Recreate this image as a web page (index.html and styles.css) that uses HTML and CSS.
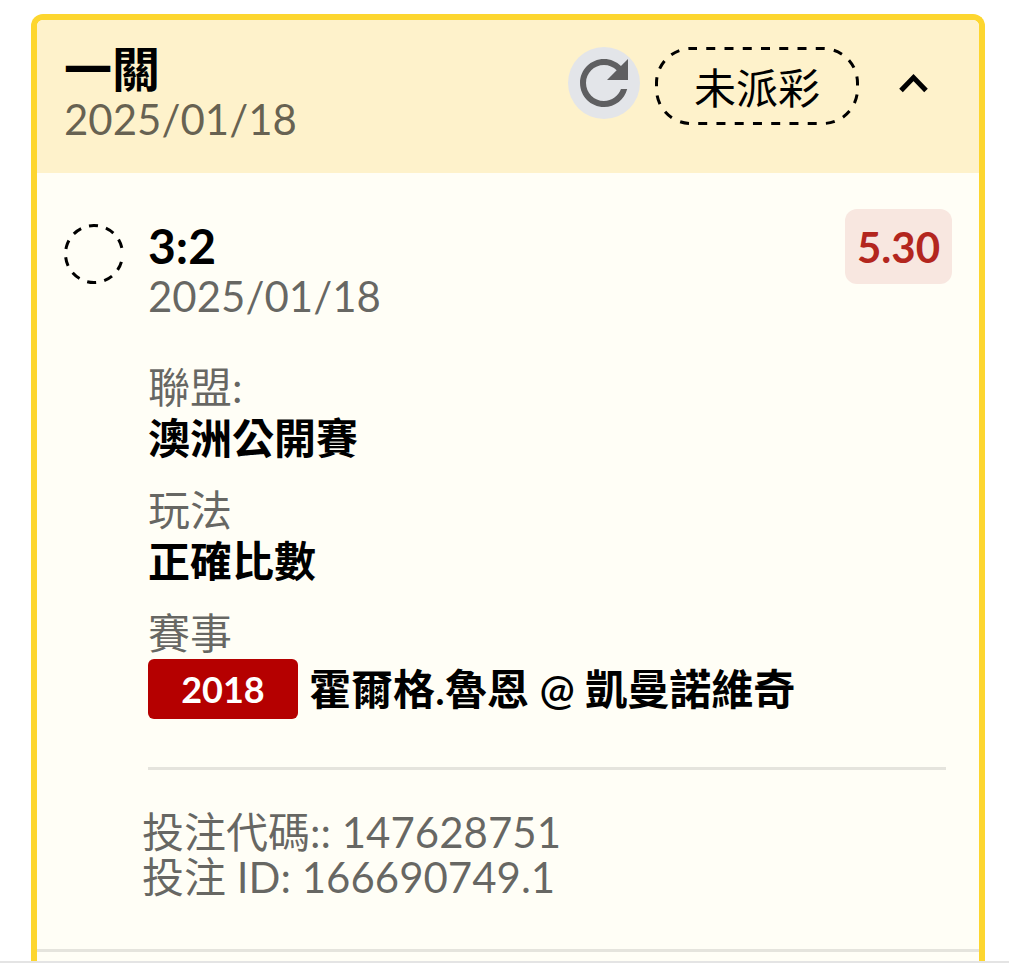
FILE: index.html
```html
<!DOCTYPE html>
<html lang="zh-Hant">
<head>
    <meta charset="UTF-8">
    <meta name="viewport" content="width=device-width, initial-scale=1.0">
    <title>一關</title>
    <link rel="stylesheet" href="styles.css">
</head>
<body>
    <main class="bet-card">
        <header class="bet-header">
            <div class="bet-heading">
                <h1 class="title">一關</h1>
                <p class="date">2025/01/18</p>
            </div>
            <div class="actions">
                <button class="refresh" type="button" aria-label="重新整理">
                    <svg viewBox="0 0 24 24">
                        <path fill="#5f5f61" d="M17.65 6.35C16.2 4.9 14.21 4 12 4c-4.42 0-7.99 3.58-7.99 8s3.57 8 7.99 8c3.73 0 6.84-2.55 7.73-6h-2.08c-.82 2.33-3.04 4-5.65 4-3.31 0-6-2.69-6-6s2.69-6 6-6c1.66 0 3.14.69 4.22 1.78L13 11h7V4l-2.35 2.35z"/>
                    </svg>
                </button>
                <div class="status">
                    <svg class="status-outline" viewBox="0 0 204 78" fill="none">
                        <rect x="1.5" y="1.5" width="201" height="75" rx="34.5" stroke="#000" stroke-width="3" stroke-dasharray="9 9.25" stroke-dashoffset="3"/>
                    </svg>
                    <span>未派彩</span>
                </div>
                <button class="toggle" type="button" aria-label="收合" aria-expanded="true">
                    <svg viewBox="0 0 30 20" fill="none">
                        <path d="M2 17.5L14.5 4.5L27 17.5" stroke="#000" stroke-width="5"/>
                    </svg>
                </button>
            </div>
        </header>

        <section class="bet-body">
            <svg class="pending" viewBox="0 0 60 60" fill="none">
                <circle cx="30" cy="30" r="28.5" stroke="#000" stroke-width="3" transform="rotate(16 30 30)" stroke-dasharray="9 8.3 9 8.3 9 8.3 9 8.3 9 8.3 9 8.3 9 8.3 9 8.3 9 8.3 9 15"/>
            </svg>
            <div class="selection">
                <h2 class="title">3:2</h2>
                <p class="date">2025/01/18</p>
            </div>
            <span class="odds">5.30</span>

            <dl class="details">
                <div class="detail">
                    <dt>聯盟:</dt>
                    <dd>澳洲公開賽</dd>
                </div>
                <div class="detail">
                    <dt>玩法</dt>
                    <dd>正確比數</dd>
                </div>
                <div class="detail">
                    <dt>賽事</dt>
                    <dd class="match"><span class="tag">2018</span>霍爾格.魯恩 @ 凱曼諾維奇</dd>
                </div>
            </dl>

            <div class="codes">
                <p>投注代碼:: 147628751</p>
                <p>投注 ID: 166690749.1</p>
            </div>
        </section>
    </main>
</body>
</html>
```

FILE: styles.css
```css
* {
    box-sizing: border-box;
}

body {
    display: flex;
    flex-direction: column;
    min-height: 100vh;
    margin: 0;
    padding: 14px 24px 0 31px;
    border-bottom: 2px solid #e4e4e4;
    background-color: #fff;
    color: #000;
    font-family: Lato, "Noto Sans CJK TC", sans-serif;
    font-size: 42px;
    line-height: 51px;
}

h1, h2, p, dl, dd {
    margin: 0;
}

button {
    padding: 0;
    border: 0;
    background: none;
    cursor: pointer;
}

svg {
    display: block;
}

.bet-card {
    flex: 1;
    border: 6px solid #fdd62f;
    border-bottom: 0;
    border-radius: 12px 12px 0 0;
    background-color: #fffef6;
}

.bet-header {
    display: flex;
    justify-content: space-between;
    padding: 24px 50px 29px 27px;
    border-radius: 6px 6px 0 0;
    background-color: #fef2cb;
}

.title {
    font-size: 48px;
    font-weight: 700;
    line-height: 50px;
}

.date {
    line-height: 50px;
    color: rgba(0, 0, 0, 0.6);
}

.actions {
    display: flex;
    align-items: flex-start;
    gap: 15px;
    padding-top: 3px;
}

.refresh {
    width: 72px;
    height: 72px;
    border-radius: 50%;
    background-color: #e3e5e9;
}

.status {
    position: relative;
    display: flex;
    align-items: center;
    justify-content: center;
    width: 204px;
    height: 78px;
    padding-top: 4px;
}

.status-outline {
    position: absolute;
    inset: 0;
}

.toggle {
    display: flex;
    align-items: center;
    justify-content: flex-end;
    width: 55px;
    height: 72px;
}

.toggle svg {
    width: 30px;
}

.bet-body {
    display: grid;
    grid-template-columns: 60px 1fr auto;
    column-gap: 24px;
    align-items: start;
    padding: 36px 27px 49px;
    border-bottom: 3px solid #e5e4dd;
}

.pending {
    width: 60px;
    margin-top: 15px;
}

.selection {
    padding-top: 12px;
}

.odds {
    padding: 13px 12px 11px;
    border-radius: 12px;
    background-color: #f8e7e0;
    color: #b3261e;
    font-weight: 700;
}

.details {
    grid-column: 2 / 4;
    display: grid;
    gap: 21px;
    margin: 41px 6px 0 0;
    padding-bottom: 48px;
    border-bottom: 3px solid #e5e4dd;
}

.details dt {
    color: rgba(0, 0, 0, 0.6);
}

.details dd {
    font-weight: 600;
}

.details .match {
    display: flex;
    align-items: center;
    gap: 11px;
}

.tag {
    width: 150px;
    border-radius: 6px;
    background-color: #b50000;
    color: #fff;
    font-size: 36px;
    font-weight: 700;
    line-height: 60px;
    text-align: center;
}

.codes {
    grid-column: 2 / 4;
    margin: 40px 0 0 -6px;
    color: rgba(0, 0, 0, 0.6);
    line-height: 45px;
}
```
